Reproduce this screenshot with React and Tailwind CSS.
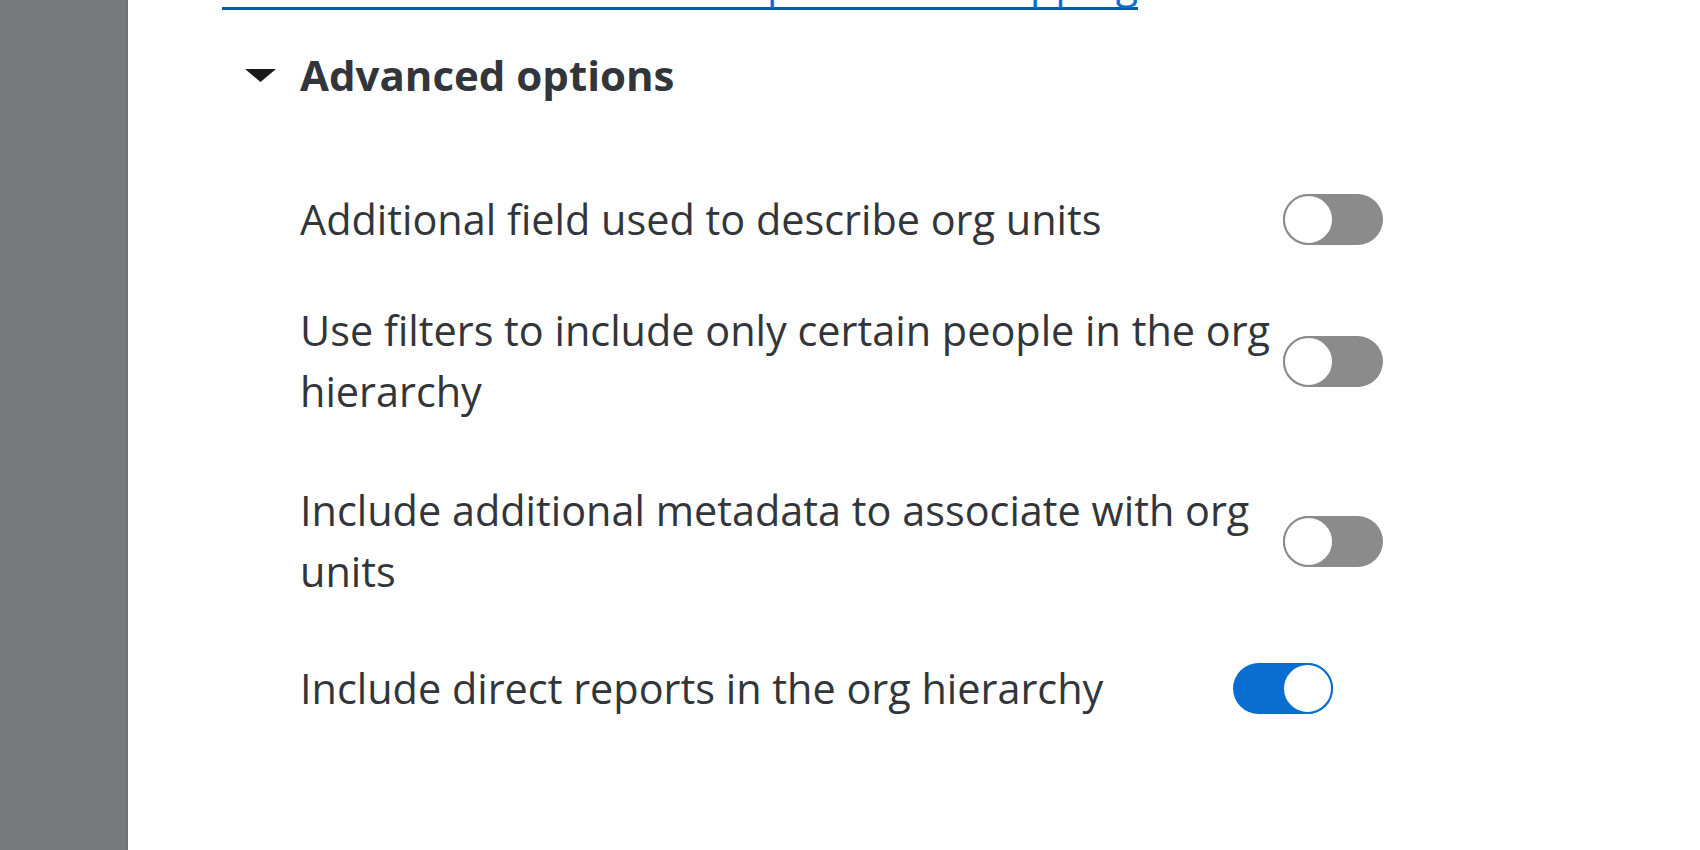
import React from 'react'

const font = { fontFamily: '"Open Sans", "Liberation Sans", sans-serif' }

function Toggle({ on }) {
  if (on) {
    return (
      <div className="flex h-[51px] w-[100px] shrink-0 items-center justify-end rounded-full bg-[#0a6ed1]">
        <div className="h-[51px] w-[51px] rounded-full border-2 border-[#0a6ed1] bg-white" />
      </div>
    )
  }
  return (
    <div className="flex h-[51px] w-[100px] shrink-0 items-center justify-start rounded-full bg-[#8b8b8b]">
      <div className="h-[51px] w-[51px] rounded-full border-2 border-[#8b8b8b] bg-white" />
    </div>
  )
}

function OptionRow({ lines, on, textWidth, className }) {
  return (
    <div className={`flex items-center ${className}`}>
      <div className={`${textWidth} text-[41.4px] leading-[61px] text-[#32363a]`}>
        {lines.map((line) => (
          <div key={line} className="whitespace-nowrap">{line}</div>
        ))}
      </div>
      <Toggle on={on} />
    </div>
  )
}

export default function App() {
  return (
    <div className="flex h-[850px] w-full overflow-hidden bg-white" style={font}>
      {/* side panel */}
      <aside className="w-[128px] shrink-0 border-r-2 border-[#6e7071] bg-[#777879]" />

      <main className="flex-1 pl-[94px]">
        {/* link cut off at the top */}
        <div className="h-[11px] overflow-hidden">
          <a className="-mt-[43px] block w-[916px] whitespace-nowrap border-b-[3px] border-[#0b5ca8] text-right text-[41px] leading-[50px] text-[#0a6ed1]">
            Read how to set up the field mapping
          </a>
        </div>

        {/* section header */}
        <div className="mt-[36px] flex items-center">
          <svg width="31" height="13" viewBox="0 0 31 13" className="ml-[23px]">
            <polygon points="0,0 31,0 15.5,13" fill="#1a1a1a" />
          </svg>
          <h2 className="ml-[24px] text-[42px] font-bold leading-[56px] text-[#32363a]">Advanced options</h2>
        </div>

        {/* options */}
        <div className="pl-[78px]">
          <OptionRow
            className="mt-[86px]"
            textWidth="w-[983px]"
            lines={['Additional field used to describe org units']}
          />
          <OptionRow
            className="mt-[50px]"
            textWidth="w-[983px]"
            lines={['Use filters to include only certain people in the org', 'hierarchy']}
          />
          <OptionRow
            className="mt-[58px]"
            textWidth="w-[983px]"
            lines={['Include additional metadata to associate with org', 'units']}
          />
          <OptionRow
            className="mt-[56px]"
            textWidth="w-[933px]"
            lines={['Include direct reports in the org hierarchy']}
            on
          />
        </div>
      </main>
    </div>
  )
}
